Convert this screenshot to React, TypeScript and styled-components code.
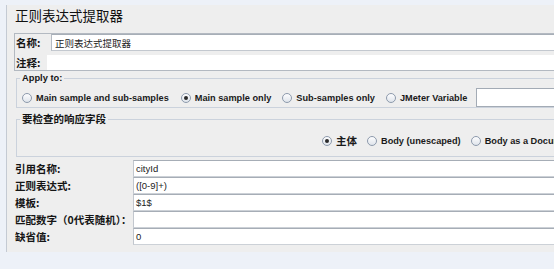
import React from 'react';
import styled, { createGlobalStyle } from 'styled-components';

const CJK = `"Noto Sans CJK SC", "Liberation Sans", sans-serif`;
const LATIN = `"Liberation Sans", "Noto Sans CJK SC", sans-serif`;

const Global = createGlobalStyle`
  html, body { margin: 0; padding: 0; background: #edf1f8; overflow: hidden; }
  body { font-family: ${LATIN}; color: #141414; }
`;

const Panel = styled.div`
  margin: 5px 0 0 6px;
  width: 820px;
  background: #eeeeee;
  border-left: 1px solid #c4cad3;
  padding-bottom: 7px;
  display: flex;
  flex-direction: column;
`;

const Title = styled.div`
  height: 28px;
  line-height: 28px;
  padding-left: 8px;
  font: 13.5px ${CJK};
  color: #111;
`;

const NameBox = styled.div`
  margin-left: 7px;
  border: 1px solid #b3b9c1;
  border-right: none;
  display: flex;
  flex-direction: column;
`;

const NameRow = styled.div<{ $h: number; $pt?: number }>`
  display: flex;
  align-items: stretch;
  height: ${p => p.$h}px;
  padding-top: ${p => p.$pt ?? 0}px;
  box-sizing: border-box;
`;

const Label = styled.div<{ $w?: number }>`
  width: ${p => (p.$w ? `${p.$w}px` : 'auto')};
  flex: none;
  box-sizing: border-box;
  padding-left: 1px;
  display: flex;
  align-items: center;
  font: bold 10.5px ${CJK};
  color: #151515;
  white-space: nowrap;
`;

const TextField = styled.div<{ $bordered?: boolean }>`
  flex: 1;
  box-sizing: border-box;
  background: #ffffff;
  border-top: ${p => (p.$bordered ? '1px solid #a7aeb7' : 'none')};
  border-bottom: ${p => (p.$bordered ? '1px solid #c3c8cf' : 'none')};
  border-left: ${p => (p.$bordered ? '1px solid #b5bbc3' : 'none')};
  padding-left: 3px;
  display: flex;
  align-items: center;
  font: 9.5px ${CJK};
  color: #222;
  white-space: nowrap;
`;

const Group = styled.fieldset<{ $mt: number }>`
  margin: ${p => p.$mt}px 0 0 9px;
  padding: 0;
  min-width: 0;
  border: 1px solid #cbd2dc;
  border-right: none;
`;

const Legend = styled.legend<{ $cjk?: boolean }>`
  margin-left: 3px;
  padding: 0 2px;
  font: bold ${p => (p.$cjk ? `10.5px ${CJK}` : `9.3px ${LATIN}`)};
  line-height: 12px;
  color: #151515;
`;

const RadioRow = styled.div<{ $pl: number; $pt: number; $pb: number }>`
  display: flex;
  align-items: center;
  height: 19px;
  padding: ${p => p.$pt}px 0 ${p => p.$pb}px ${p => p.$pl}px;
`;

const RadioItem = styled.label<{ $gap?: number }>`
  display: flex;
  align-items: center;
  margin-right: ${p => p.$gap ?? 11}px;
  color: #1a1a1a;
  white-space: nowrap;
`;

const RadioText = styled.span<{ $cjk?: boolean }>`
  font: bold ${p => (p.$cjk ? `10.5px ${CJK}` : `9.2px ${LATIN}`)};
`;

const RadioDot = styled.span<{ $checked?: boolean }>`
  width: 10px;
  height: 10px;
  box-sizing: border-box;
  border-radius: 50%;
  border: 1px solid #8d9aac;
  background: linear-gradient(#fdfdfe, #dfe4eb);
  flex: none;
  margin-right: 4px;
  display: flex;
  align-items: center;
  justify-content: center;
  &::after {
    content: '';
    display: ${p => (p.$checked ? 'block' : 'none')};
    width: 4px;
    height: 4px;
    border-radius: 50%;
    background: #2a2a2a;
  }
`;

const VarField = styled.div`
  flex: 1;
  height: 19px;
  box-sizing: border-box;
  background: #fff;
  border: 1px solid #a3abb5;
`;

const Form = styled.div`
  margin-top: 3px;
  display: grid;
  grid-template-columns: 126px 1fr;
  grid-auto-rows: 17px;
`;

const FormLabel = styled.div`
  padding-left: 8px;
  display: flex;
  align-items: center;
  font: bold 10.5px ${CJK};
  color: #151515;
  white-space: nowrap;
`;

const FormField = styled.div`
  box-sizing: border-box;
  background: #fff;
  border-top: 1px solid #a6adb6;
  border-bottom: 1px solid #ccd1d7;
  border-left: 1px solid #c2c7ce;
  padding-left: 2px;
  display: flex;
  align-items: center;
  font: 9.5px ${LATIN};
  color: #222;
`;

const Radio = ({ label, checked, gap, cjk }: { label: string; checked?: boolean; gap?: number; cjk?: boolean }) => (
  <RadioItem $gap={gap}>
    <RadioDot $checked={checked} />
    <RadioText $cjk={cjk}>{label}</RadioText>
  </RadioItem>
);

const fields: [string, string][] = [
  ['引用名称:', 'cityId'],
  ['正则表达式:', '([0-9]+)'],
  ['模板:', '$1$'],
  ['匹配数字（0代表随机）：', ''],
  ['缺省值:', '0'],
];

export default function App() {
  return (
    <>
      <Global />
      <Panel>
        <Title>正则表达式提取器</Title>
        <NameBox>
          <NameRow $h={17}>
            <Label $w={36}>名称:</Label>
            <TextField $bordered>正则表达式提取器</TextField>
          </NameRow>
          <NameRow $h={19} $pt={4}>
            <Label $w={32}>注释:</Label>
            <TextField />
          </NameRow>
        </NameBox>
        <Group $mt={1}>
          <Legend>Apply to:</Legend>
          <RadioRow $pl={5} $pt={4} $pb={0}>
            <Radio label="Main sample and sub-samples" gap={12} />
            <Radio label="Main sample only" checked />
            <Radio label="Sub-samples only" gap={11} />
            <Radio label="JMeter Variable" gap={9} />
            <VarField />
          </RadioRow>
        </Group>
        <Group $mt={5}>
          <Legend $cjk>要检查的响应字段</Legend>
          <RadioRow $pl={305} $pt={6} $pb={6}>
            <Radio label="主体" checked cjk gap={10} />
            <Radio label="Body (unescaped)" gap={10} />
            <Radio label="Body as a Document" />
          </RadioRow>
        </Group>
        <Form>
          {fields.map(([l, v]) => (
            <React.Fragment key={l}>
              <FormLabel>{l}</FormLabel>
              <FormField>{v}</FormField>
            </React.Fragment>
          ))}
        </Form>
      </Panel>
    </>
  );
}
